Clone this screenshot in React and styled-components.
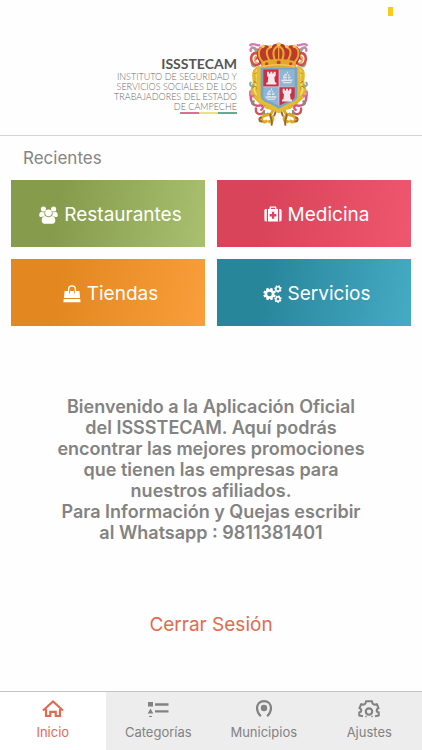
import React, { useState } from "react";
import styled, { createGlobalStyle } from "styled-components";

const GlobalStyle = createGlobalStyle`
  * {
    box-sizing: border-box;
  }
  body {
    margin: 0;
    background: #fefefe;
    font-family: Inter, "Liberation Sans", sans-serif;
  }
  button {
    margin: 0;
    border: 0;
    font-family: inherit;
    cursor: pointer;
  }
`;

const Page = styled.div`
  display: flex;
  flex-direction: column;
  min-height: 100vh;
`;

const StatusBar = styled.div`
  display: flex;
  justify-content: flex-end;
  height: 20px;
  padding: 7px 29px 0 0;
`;

const Battery = styled.span`
  width: 5px;
  height: 9px;
  background: #fccb15;
`;

const Header = styled.header`
  display: flex;
  justify-content: center;
  align-items: center;
  gap: 12px;
  padding: 22px 0 8px;
  border-bottom: 1px solid #d4d4d4;
`;

const Brand = styled.div`
  display: flex;
  flex-direction: column;
  align-items: flex-end;
  text-align: right;
  font-family: Lato, sans-serif;
`;

const BrandName = styled.h1`
  margin: 0;
  font-size: 14px;
  line-height: 16px;
  font-weight: bold;
  color: #555555;
`;

const BrandText = styled.p`
  margin: 0;
  font-size: 9px;
  line-height: 10px;
  font-weight: 300;
  color: #6c6c6c;
`;

const Stripe = styled.div`
  width: 57px;
  height: 2px;
  background: linear-gradient(
    to right,
    #d8728d 33%,
    #eee08a 33%,
    #eee08a 67%,
    #65ab8d 67%
  );
`;

const Main = styled.main`
  display: flex;
  flex: 1;
  flex-direction: column;
`;

const SectionTitle = styled.h2`
  margin: 0;
  padding: 12px 23px;
  font-size: 17px;
  line-height: 20px;
  font-weight: normal;
  color: #858585;
`;

const Tiles = styled.div`
  display: grid;
  grid-template-columns: 1fr 1fr;
  gap: 12px;
  padding: 0 11px;
`;

const Tile = styled.button`
  display: flex;
  justify-content: center;
  align-items: center;
  gap: 6px;
  height: 67px;
  padding: 2px 0 0 5px;
  color: #ffffff;
  font-size: 19px;
  background: linear-gradient(
    100deg,
    ${props => props.$from} 25%,
    ${props => props.$to}
  );
`;

const Message = styled.p`
  max-width: 360px;
  margin: 70px auto 0;
  text-align: center;
  font-size: 18px;
  line-height: 21px;
  font-weight: 600;
  color: #838383;
`;

const Logout = styled.button`
  align-self: center;
  margin: 66px 0 37px;
  padding: 4px 8px;
  background: none;
  color: #e5694f;
  font-size: 19px;
  line-height: 24px;
`;

const TabBar = styled.nav`
  display: flex;
  border-top: 1px solid #c4c4c4;
`;

const Tab = styled.button`
  display: flex;
  flex: 1;
  flex-direction: column;
  align-items: center;
  gap: 4px;
  height: 58px;
  padding: 7px 0 0;
  font-size: 13px;
  line-height: 18px;
  color: ${props => (props.$active ? "#e5694f" : "#828282")};
  background: ${props => (props.$active ? "#ffffff" : "#ededed")};
`;

const PeopleIcon = () => (
  <svg width="19" height="18" viewBox="0 0 19 18" fill="#fff" aria-hidden="true">
    <circle cx="4.4" cy="3" r="2.6" />
    <circle cx="14.6" cy="3" r="2.6" />
    <path d="M0.2 9.3c0-2.3 1.2-3.6 2.500-3.6 1 .8 2.300.7 3 .2-.7 1.500-.3 2.900.4 3.900-1.500.1-2.300.6-3 1.300H2C.7 11.100.2 10.400.2 9.300Z" />
    <path d="M18.800 9.300c0-2.300-1.200-3.600-2.500-3.600-1 .8-2.300.7-3 .2.700 1.500.3 2.900-.4 3.900 1.500.1 2.300.6 3 1.300H17c1.300 0 1.800-.7 1.800-1.800Z" />
    <circle cx="9.500" cy="6.800" r="3.400" />
    <path d="M2.700 14.300c0-2.600 1.400-4.300 3.400-4.300 2.100 1.500 4.700 1.500 6.800 0 2 0 3.400 1.700 3.400 4.300 0 2.300-.9 3.400-2.900 3.400H5.600c-2 0-2.900-1.100-2.900-3.400Z" />
  </svg>
);

const MedkitIcon = () => (
  <svg width="18" height="17" viewBox="0 0 18 17" fill="#fff" aria-hidden="true">
    <path d="M2.800 3v12.500h-.7C.9 15.500.4 14.800.4 13.800V4.700C.4 3.600.9 3 2.100 3ZM15.200 3v12.500h.7c1.200 0 1.700-.7 1.700-1.700V4.700c0-1.100-.5-1.700-1.700-1.700Z" />
    <path
      fillRule="evenodd"
      d="M4 3h1.600V1.500C5.600.8 6 .4 6.800.4h4.400c.8 0 1.200.4 1.200 1.100V3H14v12.500H4ZM7 3h4V1.800H7ZM7.900 5.800v2.300H5.700v2.300h2.200v2.300h2.300v-2.300h2.200V8.100h-2.200V5.800Z"
    />
  </svg>
);

const BagIcon = () => (
  <svg width="18" height="18" viewBox="0 0 18 18" fill="#fff" aria-hidden="true">
    <path d="M1.600 6h14.800l.7 7H.9ZM.8 14h16.400l.4 3.200H.4Z" />
    <path d="M5.600 7.500V4.300C5.600 2.200 7 .9 9 .9s3.400 1.300 3.400 3.400v3.200" fill="none" stroke="#fff" strokeWidth="1.400" />
    <path d="M6.600 6v2.500M11.400 6v2.500" stroke="#e58a28" strokeWidth="0.900" />
  </svg>
);

const Gear = ({ x, y, r, teeth, tooth, ring }) => (
  <g transform={`translate(${x} ${y})`} fill="none" stroke="#fff">
    <circle r={r} strokeWidth={ring} />
    {Array.from({ length: teeth }, (_, i) => (
      <path
        key={i}
        d={`M0 ${-r}v${-tooth}`}
        strokeWidth={tooth}
        transform={`rotate(${(360 / teeth) * i + 22})`}
      />
    ))}
  </g>
);

const GearsIcon = () => (
  <svg width="19" height="18" viewBox="0 0 19 18" aria-hidden="true">
    <Gear x={6.500} y={9} r={3.600} teeth={8} tooth={2.600} ring={2.500} />
    <Gear x={15} y={3.900} r={2.100} teeth={7} tooth={1.600} ring={1.500} />
    <Gear x={15} y={14.1} r={2.100} teeth={7} tooth={1.600} ring={1.500} />
  </svg>
);

const HomeIcon = () => (
  <svg width="22" height="20" viewBox="0 0 22 20" fill="none" stroke="currentColor" strokeWidth="2.200" aria-hidden="true">
    <path d="M1 11.500 11 2.500 21 11.500" />
    <path d="M4 10v7H8.300v-4.200h5.400V17H18v-7" />
  </svg>
);

const ListIcon = () => (
  <svg width="22" height="20" viewBox="0 0 22 20" fill="currentColor" aria-hidden="true">
    <path d="M1 3h5v4.600H1ZM8 4.300h13.500v2.400H8ZM3.500 9.500 6.300 14.500H.7ZM8 11.200h13.500v2.400H8ZM2 17.300q1.500-1.200 3 0v.8H2Z" />
  </svg>
);

const PinIcon = () => (
  <svg width="20" height="20" viewBox="0 0 20 20" fill="none" stroke="currentColor" strokeWidth="2.200" aria-hidden="true">
    <path d="M6.800 17.300C4.200 14.600 3 12 3 9.300 3 4.600 6 2.100 10 2.100s7 2.500 7 7.200c0 2.700-1.200 5.300-3.800 8" />
    <circle cx="10" cy="9" r="3.200" fill="currentColor" stroke="none" />
  </svg>
);

const SettingsIcon = () => (
  <svg width="24" height="20" viewBox="0 0 24 20" fill="none" stroke="currentColor" strokeWidth="2.100" aria-hidden="true">
    <path
      strokeLinejoin="round"
      d="M6 17.300 2.300 16.500V13.400c2.700-.5 2.700-3.400.2-4.200l1.700-4.100c2.400 1.300 4.600.2 4.800-2.900h6c.2 3.100 2.400 4.200 4.800 2.900l1.700 4.100c-2.500.8-2.500 3.700.2 4.200v3.100l-3.700.8"
    />
    <circle cx="12" cy="12.600" r="3.200" />
    <path d="M8.300 17.500h1.400M14.300 17.500h1.400" strokeWidth="1.500" />
  </svg>
);

const Tower = ({ x, y }) => (
  <path
    transform={`translate(${x} ${y})`}
    fill="#f4e9ea"
    d="M0 0h6v5h4V0h6v5h4V0h6v12l-4 4 2 16h4v6H-2v-6h4l2-16-4-4Z"
  />
);

const Ship = ({ x, y }) => (
  <g transform={`translate(${x} ${y})`}>
    <path fill="#dfe7f1" d="M17 0h3v5l8 10-3 8h9l-6 11H7L-1 24h8L5 14l6-8h6Z" />
    <path stroke="#7897b8" strokeWidth="2" fill="none" d="M18 4v20M9 13h17M7 21h20M6 29h22" />
  </g>
);

// left half of the scrollwork, mirrored for the right half
const Scrolls = () => (
  <g fill="none" strokeLinecap="round">
    <path stroke="#e3b62f" strokeWidth="20" d="M29 82c-14 8-9 20-8 33 2 16-10 24-6 37 4 12 14 13 22 25 9 11 26 18 48 18" />
    <path stroke="#f5de68" strokeWidth="6" d="M25 82c-9 13 2 20 0 33-3 12-13 23-7 35 4 9 13 12 19 23 8 9 18 13 36 15" />
    <path stroke="#a8761f" strokeWidth="3" d="M18 95c5-7 12-2 9 5M11 137c4-8 14-5 11 3M28 173c5-7 14-2 9 6M48 190c4-9 13-5 10 4M16 118l12 8" />
    <path stroke="#d878ad" strokeWidth="7" d="M4 9c9-9 18 3 27 0M5 26c-2-10 8-12 15-6 7 5 12 1 19 6M4 148c-6 10 4 18 10 12" />
    <path stroke="#dc5390" strokeWidth="7" d="M5 163c0 18 11 31 27 27 10-2 12 9 5 13" />
    <path stroke="#86ad9a" strokeWidth="6" d="M9 15c10 1 9 13 17 17M8 62c0 9 5 12 11 10M5 121c-5 9 4 15 8 8" />
    <path stroke="#d3504a" strokeWidth="8" d="M25 34c-18-5-22 16-15 28 6 10 25 7 25-7 0-10-14-11-16-3" />
    <path stroke="#f0a860" strokeWidth="5" d="M26 42c-12 0-12 18-1 20" />
    <path stroke="#d4525a" strokeWidth="7" d="M21 199c-3 16 13 22 23 11" />
    <path stroke="#7c9668" strokeWidth="7" d="M45 207c-4 9 5 13 11 8M13 187c-6-3-4-10 1-9" />
    <path stroke="#deaa28" strokeWidth="9" d="M77 199c-8 4-5 13-13 17-10 4-24 1-26 13-1 8 7 13 14 8M70 224c5 9-3 16-9 14" />
    <path stroke="#98672c" strokeWidth="6" d="M64 217c-1 12 9 20 4 31M80 208l-4 12M36 226c-8 3-5 13 2 12" />
  </g>
);

const Crest = () => (
  <svg width="59" height="85" viewBox="0 0 177 254" role="img" aria-label="Escudo de Campeche">
    <Scrolls />
    <g transform="translate(177 0) scale(-1 1)">
      <Scrolls />
    </g>
    <path fill="#e5bd34" d="M23 74h131v85c0 24-31 30-65 55-34-25-66-31-66-55Z" />
    <path fill="#78a5c7" d="M35 76h110v86c0 18-28 18-55 38-27-20-55-20-55-38Z" />
    <path fill="#d02c43" d="M43 82h47v52H43Z" />
    <path fill="#8db5d5" d="M90 82h47v52H90ZM43 134h47v57c-24-16-47-14-47-29Z" />
    <path fill="#cf2d43" d="M90 134h47v28c0 15-23 13-47 29Z" />
    <path stroke="#d8dce1" strokeWidth="2" fill="none" d="M90 82v109M43 134h94" />
    <Tower x={54} y={89} />
    <Tower x={101} y={140} />
    <Ship x={97} y={89} />
    <Ship x={49} y={139} />
    <path fill="#bb392d" d="M38 70C14 41 23 14 43 10c14-2 21 3 25 7 2-11 10-13 21-13s19 2 21 13c4-4 11-9 25-7 20 4 29 31 5 60Z" />
    <path fill="#e0a92c" d="M37 58c32-10 71-10 104 0v18H37Z" />
    <g fill="none" stroke="#e5a92e" strokeWidth="6" strokeLinecap="round">
      <path d="M44 62C24 45 26 19 43 13M63 57C48 33 53 20 62 17M78 55c-9-23-5-37 10-44 16 7 20 21 11 44M115 57c15-24 10-37 1-40M134 62c20-17 18-43 1-49" />
      <path d="M89 10v43" strokeWidth="4" />
    </g>
    <g fill="#f0cc55">
      <circle cx="42" cy="12" r="5" />
      <circle cx="64" cy="13" r="5" />
      <circle cx="89" cy="6" r="6" />
      <circle cx="114" cy="13" r="5" />
      <circle cx="136" cy="12" r="5" />
    </g>
    <g fill="#c7422e">
      <circle cx="53" cy="65" r="5" />
      <circle cx="89" cy="61" r="6" />
      <circle cx="125" cy="65" r="5" />
    </g>
    <path stroke="#f2d577" strokeWidth="3" d="M42 73c30-7 63-7 94 0" fill="none" />
  </svg>
);

const categories = [
  { title: "Restaurantes", from: "#869c4c", to: "#a8c070", Icon: PeopleIcon },
  { title: "Medicina", from: "#da445b", to: "#ee576d", Icon: MedkitIcon },
  { title: "Tiendas", from: "#e38721", to: "#f99e3a", Icon: BagIcon },
  { title: "Servicios", from: "#28869b", to: "#45abc4", Icon: GearsIcon }
];

const tabs = [
  { title: "Inicio", Icon: HomeIcon },
  { title: "Categorías", Icon: ListIcon },
  { title: "Municipios", Icon: PinIcon },
  { title: "Ajustes", Icon: SettingsIcon }
];

const App = () => {
  const [active, setActive] = useState("Inicio");

  return (
    <Page>
      <GlobalStyle />
      <StatusBar>
        <Battery />
      </StatusBar>
      <Header>
        <Brand>
          <BrandName>ISSSTECAM</BrandName>
          <BrandText>
            INSTITUTO DE SEGURIDAD Y<br />
            SERVICIOS SOCIALES DE LOS<br />
            TRABAJADORES DEL ESTADO<br />
            DE CAMPECHE
          </BrandText>
          <Stripe />
        </Brand>
        <Crest />
      </Header>
      <Main>
        <SectionTitle>Recientes</SectionTitle>
        <Tiles>
          {categories.map(({ title, from, to, Icon }) => (
            <Tile key={title} type="button" $from={from} $to={to}>
              <Icon />
              {title}
            </Tile>
          ))}
        </Tiles>
        <Message>
          Bienvenido a la Aplicación Oficial
          <br />
          del ISSSTECAM. Aquí podrás
          <br />
          encontrar las mejores promociones
          <br />
          que tienen las empresas para
          <br />
          nuestros afiliados.
          <br />
          Para Información y Quejas escribir
          <br />
          al Whatsapp : 9811381401
        </Message>
        <Logout type="button">Cerrar Sesión</Logout>
      </Main>
      <TabBar>
        {tabs.map(({ title, Icon }) => (
          <Tab
            key={title}
            type="button"
            $active={active === title}
            aria-current={active === title ? "page" : undefined}
            onClick={() => setActive(title)}
          >
            <Icon />
            {title}
          </Tab>
        ))}
      </TabBar>
    </Page>
  );
};

export default App;
